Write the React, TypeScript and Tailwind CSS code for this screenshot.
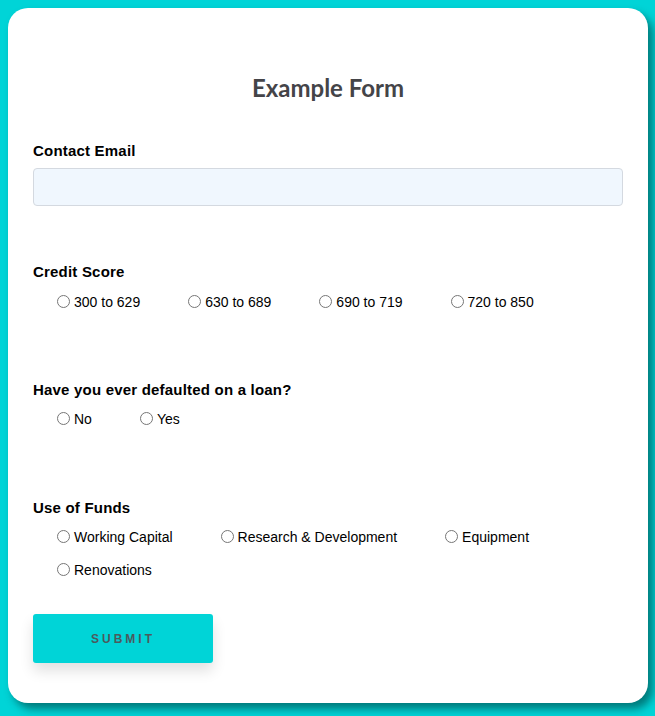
import React from "react";

const Radio = ({ name, label }: { name: string; label: string }) => (
  <label className="flex items-center text-[14px] text-black mr-[43px]">
    <input type="radio" name={name} className="m-0 ml-[5px] mr-[4px] w-[13px] h-[13px] mt-[-2px]" />
    <span>{label}</span>
  </label>
);

const Label = ({ children }: { children: React.ReactNode }) => (
  <div className="text-[15px] font-bold text-black leading-[16px] tracking-[0.2px]">{children}</div>
);

export default function App() {
  return (
    <div className="min-h-[716px] w-[655px] bg-[#00d4d7] pt-[8px] pl-[8px]" style={{ fontFamily: '"Liberation Sans", Arial, sans-serif' }}>
      <div className="w-[640px] h-[695px] bg-white rounded-[20px] shadow-[5px_6px_8px_rgba(0,60,60,0.6)] px-[25px] pt-[64px]">
        <h1 className="text-center text-[24px] font-bold text-[#444448] leading-[32px]" style={{ fontFamily: 'Lato, sans-serif' }}>
          Example Form
        </h1>
        <div className="mt-[39px]">
          <Label>Contact Email</Label>
          <div className="mt-[9px] h-[38px] w-full bg-[#f0f7fe] border border-[#d4d9e0] rounded-[4px]" />
        </div>
        <div className="mt-[58px]">
          <Label>Credit Score</Label>
          <div className="flex flex-wrap pl-[19px] mt-[14px] leading-[16px]">
            <Radio name="cs" label="300 to 629" />
            <Radio name="cs" label="630 to 689" />
            <Radio name="cs" label="690 to 719" />
            <Radio name="cs" label="720 to 850" />
          </div>
        </div>
        <div className="mt-[72px]">
          <Label>Have you ever defaulted on a loan?</Label>
          <div className="flex flex-wrap pl-[19px] mt-[13px] leading-[16px]">
            <Radio name="d" label="No" />
            <Radio name="d" label="Yes" />
          </div>
        </div>
        <div className="mt-[73px]">
          <Label>Use of Funds</Label>
          <div className="flex flex-wrap pl-[19px] mt-[13px] leading-[16px] gap-y-[17px]">
            <Radio name="u" label="Working Capital" />
            <Radio name="u" label="Research & Development" />
            <Radio name="u" label="Equipment" />
            <Radio name="u" label="Renovations" />
          </div>
        </div>
        <button className="mt-[36px] w-[180px] h-[49px] bg-[#00d4d7] rounded-[3px] text-[12px] font-bold tracking-[3px] text-[#4b5a5e] shadow-[0_8px_14px_rgba(0,0,0,0.12)]">
          SUBMIT
        </button>
      </div>
    </div>
  );
}
